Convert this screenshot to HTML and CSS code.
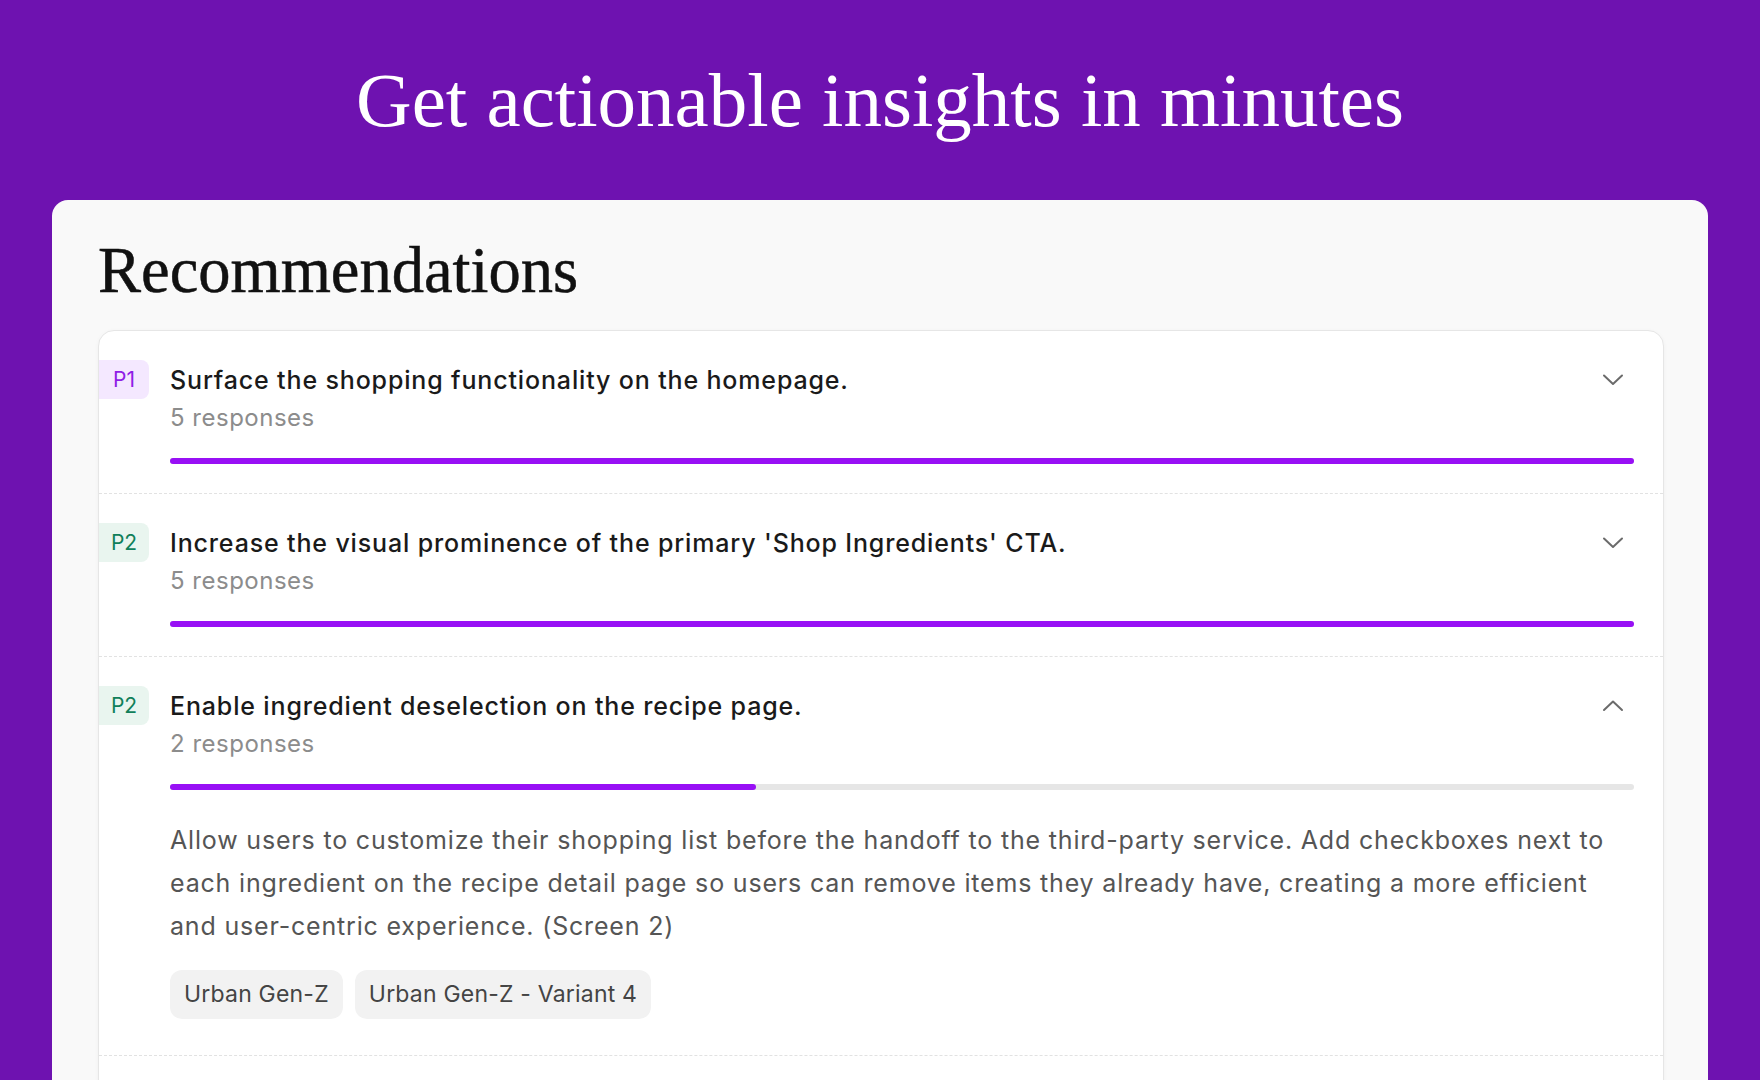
FILE: index.html
```html
<!DOCTYPE html>
<html lang="en">
<head>
    <meta charset="UTF-8">
    <meta name="viewport" content="width=device-width, initial-scale=1.0">
    <title>Get actionable insights in minutes</title>
    <link rel="stylesheet" href="styles.css">
</head>
<body>
    <header class="hero">
        <h1>Get actionable insights in minutes</h1>
    </header>

    <main class="card">
        <h2>Recommendations</h2>

        <div class="rec-list">
            <div class="rec-item">
                <span class="badge badge-p1">P1</span>
                <div class="rec-body">
                    <div class="rec-head">
                        <div>
                            <p class="rec-title">Surface the shopping functionality on the homepage.</p>
                            <p class="rec-count">5 responses</p>
                        </div>
                        <svg class="chevron" viewBox="0 0 24 24" width="24" height="24"><path d="M3 7.5l9 8.5 9-8.5"/></svg>
                    </div>
                    <div class="bar"><div class="bar-fill" style="width: 100%"></div></div>
                </div>
            </div>

            <div class="rec-item">
                <span class="badge badge-p2">P2</span>
                <div class="rec-body">
                    <div class="rec-head">
                        <div>
                            <p class="rec-title">Increase the visual prominence of the primary 'Shop Ingredients' CTA.</p>
                            <p class="rec-count">5 responses</p>
                        </div>
                        <svg class="chevron" viewBox="0 0 24 24" width="24" height="24"><path d="M3 7.5l9 8.5 9-8.5"/></svg>
                    </div>
                    <div class="bar"><div class="bar-fill" style="width: 100%"></div></div>
                </div>
            </div>

            <div class="rec-item">
                <span class="badge badge-p2">P2</span>
                <div class="rec-body">
                    <div class="rec-head">
                        <div>
                            <p class="rec-title">Enable ingredient deselection on the recipe page.</p>
                            <p class="rec-count">2 responses</p>
                        </div>
                        <svg class="chevron" viewBox="0 0 24 24" width="24" height="24"><path d="M3 16l9-8.5 9 8.5"/></svg>
                    </div>
                    <div class="bar"><div class="bar-fill" style="width: 40%"></div></div>
                    <p class="rec-desc">Allow users to customize their shopping list before the handoff to the third-party service. Add checkboxes next to each ingredient on the recipe detail page so users can remove items they already have, creating a more efficient and user-centric experience. (Screen 2)</p>
                    <div class="tags">
                        <span class="tag">Urban Gen-Z</span>
                        <span class="tag">Urban Gen-Z - Variant 4</span>
                    </div>
                </div>
            </div>

            <div class="rec-item rec-more"></div>
        </div>
    </main>
</body>
</html>
```

FILE: styles.css
```css
body {
    margin: 0;
    padding: 0;
    background-color: #6e12b0;
    font-family: Inter, "Liberation Sans", sans-serif;
    height: 1080px;
    overflow: hidden;
}
.hero {
    padding: 62px 0 61px;
    text-align: center;
}
.hero h1 {
    margin: 0;
    font-family: "Liberation Serif", serif;
    font-weight: normal;
    font-size: 77px;
    line-height: 77px;
    color: #fff;
}
.card {
    margin: 0 52px;
    padding: 39px 44px 40px 46px;
    background: #f9f9f9;
    border-radius: 16px;
}
.card h2 {
    margin: 0 0 28px;
    font-family: "Liberation Serif", serif;
    font-weight: normal;
    font-size: 64.5px;
    line-height: 63px;
    color: #111;
    -webkit-text-stroke: 0.5px #111;
}
.rec-list {
    background: #fff;
    border: 1px solid #e6e6e6;
    border-radius: 16px;
    box-shadow: 0 1px 4px rgba(0, 0, 0, 0.04);
    overflow: hidden;
}
.rec-item {
    display: flex;
    gap: 21px;
    padding: 29px 29px 29px 0;
    border-top: 1px dashed #e2e2e2;
}
.rec-item:first-child {
    border-top: none;
}
.rec-more {
    height: 120px;
}
.badge {
    flex: none;
    width: 50px;
    height: 39px;
    line-height: 39px;
    text-align: center;
    font-size: 21px;
    border-radius: 0 8px 8px 0;
}
.badge-p1 {
    background: #f4e8ff;
    color: #8f1ee6;
}
.badge-p2 {
    background: #e9f5ef;
    color: #11805a;
}
.rec-body {
    flex: 1;
    min-width: 0;
}
.rec-head {
    display: flex;
    justify-content: space-between;
    align-items: flex-start;
    padding-right: 9px;
}
.rec-title {
    margin: 0;
    font-size: 25px;
    font-weight: 500;
    line-height: 40px;
    letter-spacing: 0.85px;
    color: #1a1a1a;
}
.rec-count {
    margin: 0;
    font-size: 24px;
    line-height: 36px;
    letter-spacing: 0.5px;
    color: #8c8c8c;
}
.chevron {
    flex: none;
    margin-top: 8px;
    fill: none;
    stroke: #6b6b6b;
    stroke-width: 2;
    stroke-linecap: round;
    stroke-linejoin: round;
}
.bar {
    margin-top: 22px;
    height: 6px;
    border-radius: 3px;
    background: #e6e6e6;
}
.bar-fill {
    height: 100%;
    border-radius: 3px;
    background: #9810f5;
}
.rec-desc {
    margin: 29px 0 0;
    font-size: 25px;
    line-height: 43px;
    letter-spacing: 0.82px;
    color: #555;
}
.tags {
    display: flex;
    gap: 12px;
    margin-top: 22px;
    padding-bottom: 7px;
}
.tag {
    padding: 0 14px;
    height: 49px;
    line-height: 49px;
    border-radius: 12px;
    background: #f2f2f2;
    font-size: 23px;
    letter-spacing: 0.2px;
    color: #444;
}
```
